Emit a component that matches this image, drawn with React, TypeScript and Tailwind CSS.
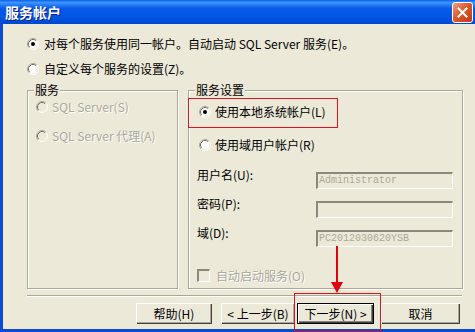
import type { ReactNode } from 'react';

function Radio({ checked = false, disabled = false }: { checked?: boolean; disabled?: boolean }) {
  return (
    <svg width="12" height="12" viewBox="0 0 12 12" className="shrink-0">
      <circle cx="6" cy="6" r="5" fill={disabled ? '#ECE9D8' : '#fff'} />
      <path d="M2.11 9.89 A5.5 5.5 0 0 1 9.89 2.11" stroke="#ACA899" fill="none" />
      <path d="M9.89 2.11 A5.5 5.5 0 0 1 2.11 9.89" stroke="#fff" fill="none" />
      <path d="M2.82 9.18 A4.5 4.5 0 0 1 9.18 2.82" stroke="#716F64" fill="none" />
      <path d="M9.18 2.82 A4.5 4.5 0 0 1 2.82 9.18" stroke="#F1EFE2" fill="none" />
      {checked && <circle cx="6" cy="6" r="2" fill={disabled ? '#ACA899' : '#000'} />}
    </svg>
  );
}

function Field({ value }: { value?: string }) {
  return (
    <div className="w-[137px] h-[17px] bg-[#ECE9D8] border-t-2 border-l-2 border-t-[#8A887C] border-l-[#8A887C] border-b border-r border-b-white border-r-white pl-[1px] font-['Liberation_Mono',monospace] text-[10px] leading-[14px] text-[#ACA899]">
      {value}
    </div>
  );
}

function Button({ children, focused = false, w }: { children: ReactNode; focused?: boolean; w: string }) {
  return (
    <div
      className={
        focused
          ? `${w} h-[21px] flex items-center justify-center border border-black bg-[#ECE9D8] shadow-[inset_1px_1px_0_#fff,inset_-1px_-1px_0_#404040,inset_-2px_-2px_0_#808080]`
          : `${w} h-[21px] flex items-center justify-center bg-[#ECE9D8] shadow-[inset_1px_1px_0_#fff,inset_-1px_-1px_0_#404040,inset_-2px_-2px_0_#ACA899]`
      }
    >
      {children}
    </div>
  );
}

function Group({ label, className, children }: { label: string; className: string; children: ReactNode }) {
  return (
    <div className={`relative border border-[#ACA899] shadow-[inset_1px_1px_0_#fff,1px_1px_0_#fff] ${className}`}>
      <span className="absolute top-[-9px] left-[6px] bg-[#ECE9D8] px-[1px] leading-[16px]">{label}</span>
      {children}
    </div>
  );
}

export default function App() {
  const dim = 'text-[#ACA899] [text-shadow:1px_1px_0_#fff]';

  return (
    <div className="relative w-[475px] h-[332px] flex flex-col overflow-hidden font-['Noto_Sans_CJK_SC',sans-serif] text-[12px] text-black">
      {/* title bar */}
      <div className="h-[24px] flex items-center justify-between pl-[5px] pr-[2px] bg-[linear-gradient(to_bottom,#0A5FE8,#3D95FF_10%,#0A5AE8_35%,#0055E5_70%,#0047D0)]">
        <span className="text-white font-bold text-[14px] [text-shadow:1px_1px_0_#0A1E80]">服务帐户</span>
        <div className="w-[21px] h-[21px] rounded-[3px] border border-white bg-[linear-gradient(135deg,#F0A080,#DD5A30_45%,#C2380F)] flex items-center justify-center">
          <svg width="11" height="11" viewBox="0 0 11 11">
            <path d="M1.5 1.5 L9.5 9.5 M9.5 1.5 L1.5 9.5" stroke="#fff" strokeWidth="2" strokeLinecap="square" />
          </svg>
        </div>
      </div>

      <div className="flex flex-1 min-h-0">
        <div className="w-[3px] bg-[#0A4BD6]" />
        <div className="flex-1 bg-[#ECE9D8] flex flex-col pl-[24px] pt-[12px]">
          <div className="h-[16px] flex items-center gap-[5px]">
            <Radio checked />
            <span>对每个服务使用同一帐户。自动启动 SQL Server 服务(E)。</span>
          </div>
          <div className="mt-[9px] h-[16px] flex items-center gap-[5px]">
            <Radio />
            <span>自定义每个服务的设置(Z)。</span>
          </div>

          <div className="mt-[13px] flex gap-[10px] h-[199px]">
            <Group label="服务" className="w-[151px] pt-[8px] pl-[8px]">
              <div className="h-[16px] flex items-center gap-[4px]">
                <Radio disabled />
                <span className={dim}>SQL Server(S)</span>
              </div>
              <div className="mt-[13px] h-[16px] flex items-center gap-[4px]">
                <Radio disabled />
                <span className={dim}>SQL Server 代理(A)</span>
              </div>
            </Group>

            <Group label="服务设置" className="w-[275px] pt-[13px]">
              <div className="absolute left-[-1px] top-[7px] w-[150px] h-[30px] border border-[#E0101E]" />
              <div className="h-[16px] pl-[10px] flex items-center gap-[4px]">
                <Radio checked />
                <span>使用本地系统帐户(L)</span>
              </div>
              <div className="mt-[17px] h-[16px] pl-[10px] flex items-center gap-[4px]">
                <Radio />
                <span>使用域用户帐户(R)</span>
              </div>
              <div className="mt-[19px] pl-[8px] flex items-start">
                <span className="w-[119px] -mt-[5px] leading-[16px]">用户名(U):</span>
                <Field value="Administrator" />
              </div>
              <div className="mt-[12px] pl-[8px] flex items-start">
                <span className="w-[119px] -mt-[5px] leading-[16px]">密码(P):</span>
                <Field />
              </div>
              <div className="mt-[12px] pl-[8px] flex items-start">
                <span className="w-[119px] -mt-[5px] leading-[16px]">域(D):</span>
                <Field value="PC2012030620YSB" />
              </div>
              <div className="mt-[22px] pl-[8px] h-[13px] flex items-center gap-[6px]">
                <div className="w-[13px] h-[13px] bg-[#ECE9D8] border-t-2 border-l-2 border-t-[#8A887C] border-l-[#8A887C] border-b border-r border-b-white border-r-white" />
                <span className={dim}>自动启动服务(O)</span>
              </div>
            </Group>
          </div>

          <div className="mt-[6px] w-[435px] h-[2px] border-t border-t-[#ACA899] border-b border-b-white" />

          <div className="mt-[6px] flex pl-[109px]">
            <Button w="w-[76px]">帮助(H)</Button>
            <div className="ml-[9px]">
              <Button w="w-[74px]">&lt; 上一步(B)</Button>
            </div>
            <div className="ml-[2px]">
              <Button w="w-[77px]" focused>下一步(N) &gt;</Button>
            </div>
            <div className="ml-[7px]">
              <Button w="w-[79px]">取消</Button>
            </div>
          </div>
        </div>
      </div>
      <div className="h-[3px] bg-[#0A4BD6]" />

      {/* annotations */}
      <svg className="absolute left-[331px] top-[245px]" width="12" height="49" viewBox="0 0 12 49">
        <path d="M6 1 L6 38" stroke="#E00010" strokeWidth="2" />
        <path d="M0 37 L12 37 L6 48 Z" fill="#E00010" />
      </svg>
      <div className="absolute left-[294px] top-[293px] w-[87px] h-[39px] border border-[#E0101E]" />
    </div>
  );
}
